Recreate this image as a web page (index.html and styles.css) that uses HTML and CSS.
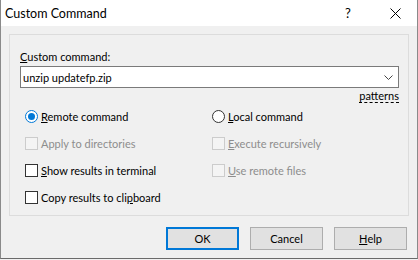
FILE: index.html
```html
<!DOCTYPE html>
<html>
<head>
<meta charset="utf-8">
<link rel="stylesheet" href="styles.css">
</head>
<body>
<div class="window">
  <div class="titlebar">
    <span class="title">Custom Command</span>
    <span class="help">?</span>
    <span class="close"><svg width="11" height="11" viewBox="0 0 11 11"><path d="M0.5 0.5 L10.5 10.5 M10.5 0.5 L0.5 10.5" stroke="#000" stroke-width="1" fill="none"/></svg></span>
  </div>
  <div class="content">
    <div class="group">
      <div class="label"><u>C</u>ustom command:</div>
      <div class="combo">
        <span class="combo-text">unzip updatefp.zip</span>
        <svg class="chevron" width="9" height="5" viewBox="0 0 9 5"><path d="M0.5 0.5 L4.5 4.5 L8.5 0.5" stroke="#444" stroke-width="1" fill="none"/></svg>
      </div>
      <div class="patterns"><span class="link">patterns</span></div>
      <div class="options">
        <div class="row"><span class="radio checked"><span class="dot"></span></span><span class="text"><u>R</u>emote command</span></div>
        <div class="row"><span class="radio"></span><span class="text"><u>L</u>ocal command</span></div>
        <div class="row disabled"><span class="check"></span><span class="text">Apply to directories</span></div>
        <div class="row disabled"><span class="check"></span><span class="text"><u>E</u>xecute recursively</span></div>
        <div class="row"><span class="check"></span><span class="text"><u>S</u>how results in terminal</span></div>
        <div class="row disabled"><span class="check"></span><span class="text"><u>U</u>se remote files</span></div>
        <div class="row"><span class="check"></span><span class="text">Copy results to cli<u>p</u>board</span></div>
      </div>
    </div>
    <div class="buttons">
      <div class="btn default">OK</div>
      <div class="btn">Cancel</div>
      <div class="btn"><u>H</u>elp</div>
    </div>
  </div>
</div>
</body>
</html>
```

FILE: styles.css
```css
html, body {
  margin: 0;
  padding: 0;
  background: #f0f0f0;
}
body {
  width: 418px;
  height: 260px;
  overflow: hidden;
  font-family: Lato, "Noto Sans", sans-serif;
  font-size: 11px;
  color: #000;
}
.window {
  width: 418px;
  height: 259px;
  box-sizing: border-box;
  border-left: 1px solid #8a8a8a;
  border-right: 1px solid #8a8a8a;
  border-bottom: 1px solid #6a6a6a;
  background: #f0f0f0;
}
.titlebar {
  height: 26px;
  background: #fff;
  display: flex;
  align-items: center;
}
.title {
  font-size: 12.5px;
  margin-left: 4px;
  flex: 1;
}
.help {
  font-size: 13px;
  width: 10px;
  margin-right: 35px;
}
.close {
  display: flex;
  margin-right: 16px;
}
.content {
  padding: 8px 8px 0 8px;
}
.group {
  border: 1px solid #dcdcdc;
  padding: 14px 9px 4px 10px;
}
.label {
  line-height: 15px;
  height: 15px;
}
.combo {
  margin-top: 2px;
  height: 22px;
  box-sizing: border-box;
  border: 1px solid #7a7a7a;
  background: #fff;
  display: flex;
  align-items: center;
  padding-left: 2px;
  padding-right: 5px;
}
.combo-text {
  flex: 1;
  line-height: 15px;
}
.chevron {
  display: block;
}
.patterns {
  line-height: 15px;
  height: 15px;
  text-align: right;
}
.link {
  border-bottom: 1px dashed #000;
  line-height: 13px;
  display: inline-block;
}
.options {
  display: grid;
  grid-template-columns: 187px 1fr;
  grid-auto-rows: 27px;
  padding-left: 5px;
}
.row {
  display: flex;
  align-items: center;
}
.text {
  margin-left: 3px;
  line-height: 15px;
}
.radio {
  width: 13px;
  height: 13px;
  box-sizing: border-box;
  border: 1px solid #333;
  border-radius: 50%;
  background: #fff;
  display: flex;
  align-items: center;
  justify-content: center;
}
.radio.checked {
  border-color: #0078d7;
}
.dot {
  width: 7px;
  height: 7px;
  border-radius: 50%;
  background: #0078d7;
}
.check {
  width: 13px;
  height: 13px;
  box-sizing: border-box;
  border: 1px solid #333;
  background: #fff;
}
.disabled .check {
  border-color: #cccccc;
  background: #f4f4f4;
}
.disabled .text {
  color: #8d8d8d;
}
.buttons {
  display: flex;
  justify-content: flex-end;
  gap: 11px;
  margin-top: 11px;
  padding-right: 2px;
}
.btn {
  width: 73px;
  height: 23px;
  box-sizing: border-box;
  border: 1px solid #adadad;
  background: #e1e1e1;
  display: flex;
  align-items: center;
  justify-content: center;
  line-height: 15px;
}
.btn.default {
  border: 2px solid #0078d7;
}
```
